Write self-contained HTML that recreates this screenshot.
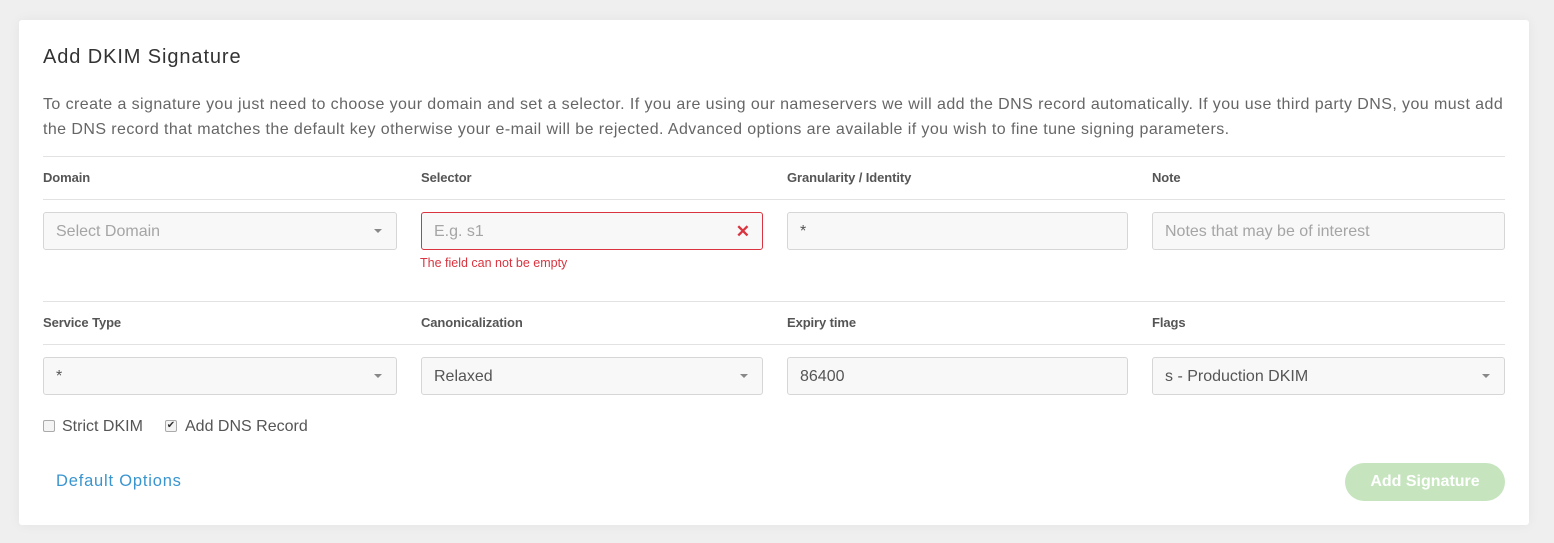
<!DOCTYPE html>
<html><head><style>
body{margin:0;background:#efefef;font-family:"Liberation Sans",sans-serif;width:1554px;height:543px;overflow:hidden;position:relative}
.card{position:absolute;left:19px;top:20px;width:1510px;height:505px;background:#fff;border-radius:3px;box-shadow:0 0 12px rgba(0,0,0,.05)}
.a{position:absolute}
h1{position:absolute;left:24px;top:26px;margin:0;font-size:20px;font-weight:normal;color:#333;letter-spacing:.9px}
p{position:absolute;left:24px;top:72px;margin:0;width:1475px;font-size:16px;letter-spacing:.42px;line-height:25px;color:#666}
.hr{position:absolute;left:24px;width:1462px;height:1px;background:#e2e2e2}
.lbl{position:absolute;font-size:13px;color:#555;font-weight:bold;letter-spacing:-.1px}
.in{position:absolute;height:36px;border:1px solid #d6d6d6;border-radius:3px;background:#f8f8f8;font-size:16px;line-height:38px;padding-left:12px;box-sizing:content-box;color:#555}
.ph{color:#a5a5a5}
.car{position:absolute;right:14px;top:16px;width:0;height:0;border-left:4px solid transparent;border-right:4px solid transparent;border-top:4px solid #888}
</style></head><body>
<div class="card">
<h1>Add DKIM Signature</h1>
<p>To create a signature you just need to choose your domain and set a selector. If you are using our nameservers we will add the DNS record automatically. If you use third party DNS, you must add the DNS record that matches the default key otherwise your e-mail will be rejected. Advanced options are available if you wish to fine tune signing parameters.</p>
<div class="hr" style="top:136px"></div>
<div class="lbl" style="left:24px;top:150px">Domain</div>
<div class="lbl" style="left:402px;top:150px">Selector</div>
<div class="lbl" style="left:768px;top:150px">Granularity / Identity</div>
<div class="lbl" style="left:1133px;top:150px">Note</div>
<div class="hr" style="top:179px"></div>
<div class="in ph" style="left:24px;top:192px;width:340px">Select Domain<span class="car"></span></div>
<div class="in ph" style="left:402px;top:192px;width:328px;border-color:#d9343f">E.g. s1<span style="position:absolute;right:12px;top:0;color:#d9343f;font-weight:bold;font-size:17px">✕</span></div>
<div class="a" style="left:401px;top:236px;font-size:12.5px;color:#d9343f">The field can not be empty</div>
<div class="in" style="left:768px;top:192px;width:327px">*</div>
<div class="in ph" style="left:1133px;top:192px;width:339px">Notes that may be of interest</div>
<div class="hr" style="top:281px"></div>
<div class="lbl" style="left:24px;top:295px">Service Type</div>
<div class="lbl" style="left:402px;top:295px">Canonicalization</div>
<div class="lbl" style="left:768px;top:295px">Expiry time</div>
<div class="lbl" style="left:1133px;top:295px">Flags</div>
<div class="hr" style="top:324px"></div>
<div class="in" style="left:24px;top:337px;width:340px">*<span class="car"></span></div>
<div class="in" style="left:402px;top:337px;width:328px">Relaxed<span class="car"></span></div>
<div class="in" style="left:768px;top:337px;width:327px">86400</div>
<div class="in" style="left:1133px;top:337px;width:339px">s - Production DKIM<span class="car"></span></div>
<div class="a" style="left:24px;top:400px;width:10px;height:10px;border:1px solid #aaa;border-radius:2px;background:#f4f4f4"></div>
<div class="a" style="left:43px;top:398px;font-size:16px;color:#555">Strict DKIM</div>
<div class="a" style="left:146px;top:400px;width:10px;height:10px;border:1px solid #aaa;border-radius:2px;background:#f4f4f4;font-size:10px;line-height:10px;text-align:center;color:#333">✔</div>
<div class="a" style="left:166px;top:398px;font-size:16px;color:#555">Add DNS Record</div>
<div class="a" style="left:37px;top:452px;font-size:16.5px;letter-spacing:.8px;color:#3a95cf">Default Options</div>
<div class="a" style="left:1326px;top:443px;width:160px;height:38px;border-radius:19px;background:#c6e5bf;color:#fff;font-size:16px;font-weight:bold;line-height:38px;text-align:center">Add Signature</div>
</div>
</body></html>
